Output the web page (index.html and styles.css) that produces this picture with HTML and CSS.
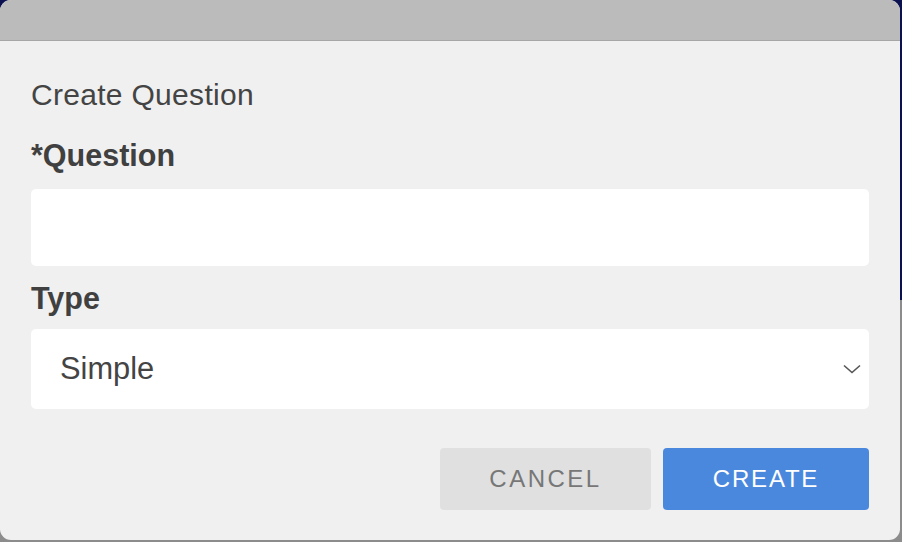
FILE: index.html
```html
<!DOCTYPE html>
<html>
<head>
<meta charset="utf-8">
<link rel="stylesheet" href="styles.css">
</head>
<body>
<div class="window">
  <div class="titlebar"></div>
  <div class="content">
    <h1 class="title">Create Question</h1>
    <label class="label label-question">*Question</label>
    <div class="input"></div>
    <label class="label label-type">Type</label>
    <div class="select">
      <span class="select-value">Simple</span>
      <svg class="chevron" width="18" height="10" viewBox="0 0 18 10"><polyline points="1,1.5 9,8.5 17,1.5" fill="none" stroke="#555" stroke-width="1.6"/></svg>
    </div>
    <div class="actions">
      <button class="btn btn-cancel">CANCEL</button>
      <button class="btn btn-create">CREATE</button>
    </div>
  </div>
</div>
</body>
</html>
```

FILE: styles.css
```css
html, body {
  margin: 0;
  padding: 0;
}
body {
  width: 902px;
  height: 542px;
  overflow: hidden;
  background: linear-gradient(to bottom, #0b1150 0, #0b1150 300px, #8c8c8c 300px);
  font-family: "Liberation Sans", Arial, sans-serif;
}
.window {
  width: 900px;
  height: 540px;
  background: #f0f0f0;
  border-radius: 11px;
  overflow: hidden;
  display: flex;
  flex-direction: column;
}
.titlebar {
  height: 40px;
  background: #bbbbbb;
  border-bottom: 1.5px solid #a6a6a6;
  flex: none;
}
.content {
  padding: 37px 31px 0 31px;
  display: flex;
  flex-direction: column;
}
.title {
  margin: 0;
  font-size: 30px;
  line-height: 34px;
  letter-spacing: 0.3px;
  font-weight: normal;
  color: #444;
}
.label {
  font-size: 30.5px;
  line-height: 36px;
  font-weight: bold;
  color: #404040;
}
.label-question {
  margin-top: 25px;
}
.input {
  margin-top: 16px;
  height: 77px;
  background: #fff;
  border-radius: 5px;
}
.label-type {
  margin-top: 14px;
}
.select {
  margin-top: 13px;
  height: 80px;
  background: #fff;
  border-radius: 5px;
  display: flex;
  align-items: center;
  justify-content: space-between;
  padding: 0 8px 0 29px;
}
.select-value {
  font-size: 30.8px;
  color: #444;
}
.chevron {
  display: block;
}
.actions {
  margin-top: 39px;
  display: flex;
  justify-content: flex-end;
  gap: 12px;
}
.btn {
  height: 62px;
  border: none;
  border-radius: 4px;
  font-family: "Liberation Sans", Arial, sans-serif;
  font-size: 24px;
  padding: 0;
}
.btn-cancel {
  width: 211px;
  background: #e0e0e0;
  color: #777;
  letter-spacing: 2.5px;
}
.btn-create {
  width: 206px;
  background: #4a88de;
  color: #fff;
  letter-spacing: 1.8px;
}
```
